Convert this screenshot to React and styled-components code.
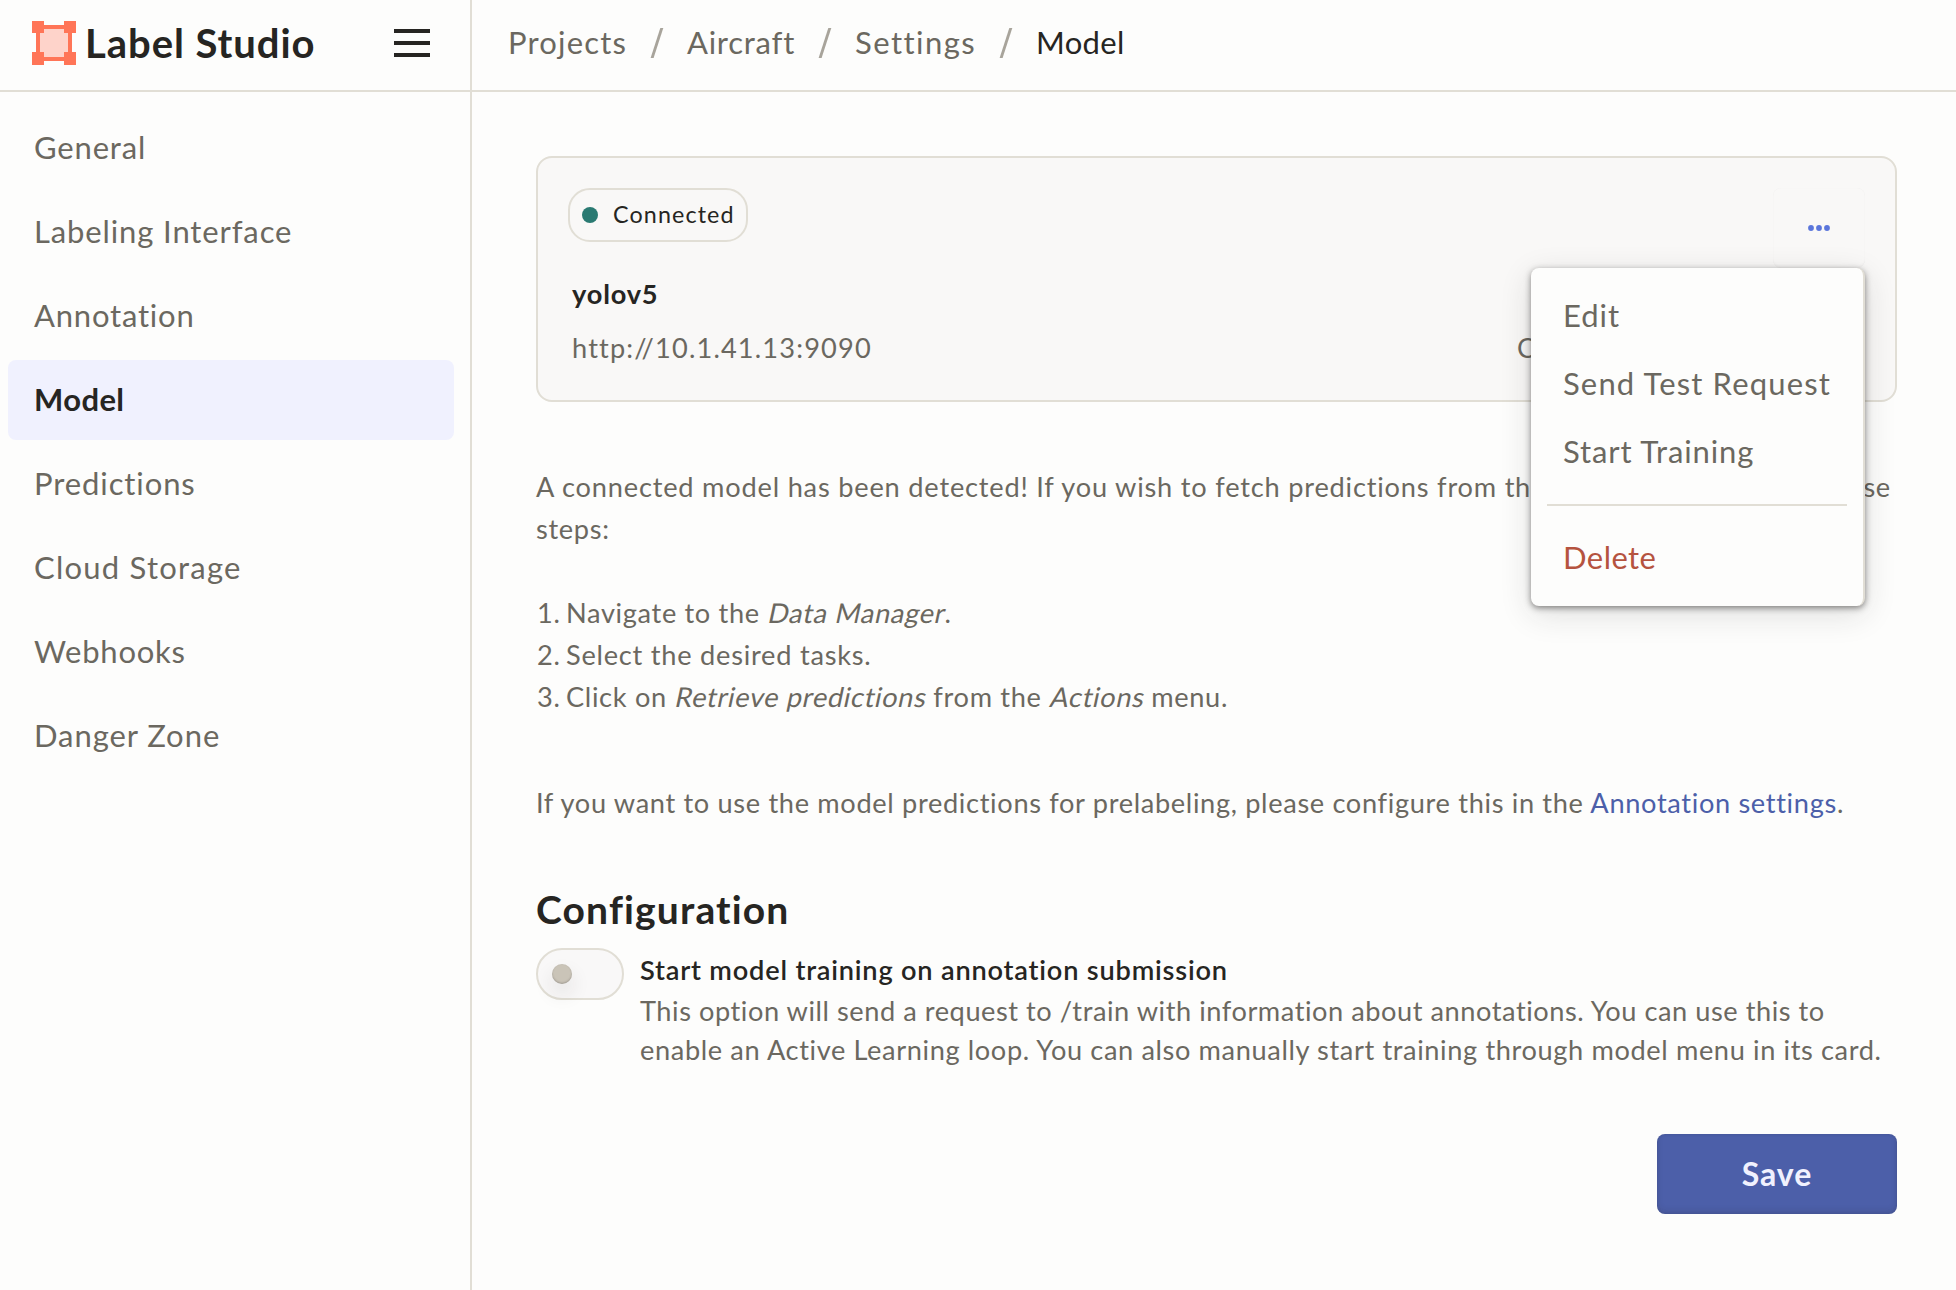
import React from "react";
import styled, { createGlobalStyle } from "styled-components";

const color = {
  page: "#fdfdfc",
  line: "#e1ded5",
  text: "#6b6860",
  strong: "#262522",
  primary: "#4c5fa9",
};

const GlobalStyle = createGlobalStyle`
  *, *::before, *::after { box-sizing: border-box; }
  body {
    margin: 0;
    background: ${color.page};
    color: ${color.text};
    font-family: Lato, "Open Sans", sans-serif;
    overflow: hidden;
  }
`;

const Page = styled.div`
  display: grid;
  grid-template-columns: 472px 1fr;
  grid-template-rows: 92px 1fr;
  height: 1290px;
`;

const Brand = styled.header`
  display: flex;
  align-items: center;
  padding: 0 40px 4px 32px;
  border-right: 2px solid ${color.line};
  border-bottom: 2px solid ${color.line};
`;

const BrandName = styled.span`
  flex: 1;
  margin-left: 9px;
  color: ${color.strong};
  font-size: 40px;
  font-weight: 700;
  letter-spacing: 0.95px;
  white-space: nowrap;
`;

const Crumbs = styled.nav`
  display: flex;
  align-items: center;
  padding: 0 0 6px 36px;
  border-bottom: 2px solid ${color.line};
  white-space: nowrap;
`;

const Crumb = styled.a`
  width: ${(p) => p.$width}px;
  color: ${(p) => (p.$current ? color.strong : color.text)};
  font-size: 31px;
  letter-spacing: ${(p) => p.$spacing}px;
`;

const Slash = styled.svg`
  width: 14px;
  height: 30px;
  margin: 2px 23px 0 23px;
`;

const Sidebar = styled.aside`
  display: flex;
  flex-direction: column;
  gap: 4px;
  padding: 16px 16px 0 8px;
  border-right: 2px solid ${color.line};
`;

const SideItem = styled.a`
  display: flex;
  align-items: center;
  height: 80px;
  padding: 0 26px 2px;
  border-radius: 8px;
  background: ${(p) => (p.$active ? "#f0f1fe" : "transparent")};
  color: ${(p) => (p.$active ? color.strong : color.text)};
  font-size: 31px;
  font-weight: ${(p) => (p.$active ? 700 : 400)};
  letter-spacing: ${(p) => p.$spacing}px;
`;

const Main = styled.main`
  padding: 64px 59px 0 64px;
`;

const Card = styled.section`
  position: relative;
  height: 246px;
  padding: 30px;
  border: 2px solid ${color.line};
  border-radius: 16px;
  background: #f9f8f7;
`;

const CardTop = styled.div`
  display: flex;
  justify-content: space-between;
  height: 54px;
`;

const Badge = styled.div`
  display: flex;
  align-items: center;
  gap: 15px;
  width: 180px;
  height: 54px;
  padding: 0 0 2px 12px;
  border: 2px solid ${color.line};
  border-radius: 22px;
  color: ${color.strong};
  font-size: 23.3px;
  letter-spacing: 1.12px;
  white-space: nowrap;
`;

const Dot = styled.span`
  flex: none;
  width: 16px;
  height: 16px;
  margin-top: 2px;
  border-radius: 50%;
  background: #2a7a72;
`;

const MoreButton = styled.button`
  display: flex;
  align-items: center;
  justify-content: center;
  width: 92px;
  height: 80px;
  padding: 0;
  border: 0;
  border-radius: 8px;
  background: transparent;
  box-shadow: inset 0 -2px 2px rgba(38, 37, 34, 0.02), inset 0 0 1px rgba(38, 37, 34, 0.06);
`;

const ModelName = styled.h3`
  margin: 32px 0 0 4px;
  color: ${color.strong};
  font-size: 27.2px;
  font-weight: 700;
  line-height: 40px;
  letter-spacing: 0.8px;
`;

const ModelMeta = styled.div`
  display: flex;
  justify-content: space-between;
  margin: 14px 0 0 4px;
  font-size: 27.2px;
  line-height: 40px;
`;

const Url = styled.span`
  letter-spacing: 1.15px;
`;

const Created = styled.span`
  width: 348px;
`;

const Menu = styled.div`
  position: absolute;
  top: 110px;
  right: 30px;
  z-index: 1;
  width: 334px;
  height: 338px;
  padding: 13px 16px;
  border-right: 2px solid ${color.line};
  border-radius: 8px;
  background: ${color.page};
  box-shadow: 0 2px 6px rgba(38, 37, 34, 0.55), 0 8px 32px rgba(38, 37, 34, 0.14);
`;

const MenuItem = styled.div`
  height: 68px;
  padding-left: 16px;
  color: ${(p) => (p.$danger ? "#b5533f" : color.text)};
  font-size: 31px;
  line-height: 68px;
  letter-spacing: ${(p) => p.$spacing}px;
  white-space: nowrap;
`;

const MenuDivider = styled.hr`
  height: 2px;
  margin: 19px 0 17px;
  border: 0;
  background: ${color.line};
`;

const Text = styled.p`
  margin: 64px 0 0;
  font-size: 27.2px;
  line-height: 42px;
  letter-spacing: ${(p) => p.$spacing}px;
`;

const Sentence = styled.span`
  letter-spacing: 0.8px;
`;

const Steps = styled.ol`
  margin: 42px 0 0;
  padding: 0;
  list-style: none;
  font-size: 27.2px;
  line-height: 42px;
`;

const Step = styled.li`
  display: flex;
  letter-spacing: ${(p) => p.$spacing}px;
  white-space: pre;
`;

const StepNumber = styled.span`
  width: 30px;
  padding-left: 1px;
`;

const Slanted = styled.span`
  display: inline-block;
  transform: skewX(-12deg);
  transform-origin: 0 72%;
  font-style: normal;
`;

const Link = styled.a`
  color: ${color.primary};
`;

const Heading = styled.h2`
  margin: 61px 0 0;
  color: ${color.strong};
  font-size: 39px;
  font-weight: 700;
  line-height: 48px;
  letter-spacing: 1.15px;
`;

const Option = styled.div`
  display: flex;
  gap: 16px;
  margin-top: 15px;
`;

const Toggle = styled.span`
  flex: none;
  display: flex;
  align-items: center;
  width: 88px;
  height: 52px;
  padding-left: 14px;
  border: 2px solid ${color.line};
  border-radius: 26px;
  background: #f9f8f8;
`;

const Knob = styled.span`
  width: 20px;
  height: 20px;
  border-radius: 50%;
  background: #cac4b8;
  box-shadow: inset 0 -1px 2px rgba(38, 37, 34, 0.25), 0 10px 20px rgba(38, 37, 34, 0.12);
`;

const OptionText = styled.div`
  padding-top: 1px;
  font-size: 27.2px;
`;

const OptionTitle = styled.div`
  margin-bottom: 1px;
  color: ${color.strong};
  font-weight: 600;
  line-height: 41px;
  letter-spacing: 0.8px;
`;

const OptionLine = styled.div`
  line-height: 39.2px;
  letter-spacing: ${(p) => p.$spacing}px;
  white-space: nowrap;
`;

const Actions = styled.div`
  display: flex;
  justify-content: flex-end;
  margin-top: 65px;
`;

const SaveButton = styled.button`
  width: 240px;
  height: 80px;
  padding: 0 0 1px;
  border: 0;
  border-radius: 8px;
  background: ${color.primary};
  box-shadow: inset 0 -3px 6px rgba(38, 37, 34, 0.12), inset 0 0 3px rgba(38, 37, 34, 0.12);
  color: #f0f1fe;
  font-family: inherit;
  font-size: 32px;
  font-weight: 700;
  letter-spacing: 0.9px;
`;

const Logo = () => (
  <svg width="44" height="44" viewBox="0 0 44 44">
    <rect x="6" y="6" width="32" height="32" fill="#fed3ca" />
    <path
      d="M0 0h12v4h20V0h12v12h-4v19h4v13H32v-4H12v4H0V31h4V12H0zM12 8v4H8v19h4v5h20v-5h4V12h-4V8z"
      fill="#ff7557"
      fillRule="evenodd"
    />
  </svg>
);

const Hamburger = () => (
  <svg width="36" height="28" viewBox="0 0 36 28" fill={color.strong}>
    <rect width="36" height="4" />
    <rect y="12" width="36" height="4" />
    <rect y="24" width="36" height="4" />
  </svg>
);

const Dots = () => (
  <svg width="22" height="6" viewBox="0 0 22 6" fill="#5b76db">
    <circle cx="3" cy="3" r="2.9" />
    <circle cx="11" cy="3" r="2.9" />
    <circle cx="19" cy="3" r="2.9" />
  </svg>
);

const sections = [
  ["General", 0.84],
  ["Labeling Interface", 0.88],
  ["Annotation", 0.8],
  ["Model", 0.4],
  ["Predictions", 0.9],
  ["Cloud Storage", 1.23],
  ["Webhooks", 0.75],
  ["Danger Zone", 0.94],
];

const crumbs = [
  ["Projects", 119, 1.17],
  ["Aircraft", 108, 0.75],
  ["Settings", 121, 1.45],
  ["Model", 90, 0.35],
];

export default function App() {
  return (
    <>
      <GlobalStyle />
      <Page>
        <Brand>
          <Logo />
          <BrandName>Label Studio</BrandName>
          <Hamburger />
        </Brand>
        <Crumbs>
          {crumbs.map(([name, width, spacing], i) => (
            <React.Fragment key={name}>
              {i > 0 && (
                <Slash viewBox="0 0 14 30">
                  <path d="M10.3 0H13.3L3.6 30H0.6z" fill="#a8a49b" />
                </Slash>
              )}
              <Crumb $width={width} $spacing={spacing} $current={i === crumbs.length - 1}>
                {name}
              </Crumb>
            </React.Fragment>
          ))}
        </Crumbs>
        <Sidebar>
          {sections.map(([name, spacing]) => (
            <SideItem key={name} $spacing={spacing} $active={name === "Model"}>
              {name}
            </SideItem>
          ))}
        </Sidebar>
        <Main>
          <Card>
            <CardTop>
              <Badge>
                <Dot />
                Connected
              </Badge>
              <MoreButton aria-label="More">
                <Dots />
              </MoreButton>
            </CardTop>
            <ModelName>yolov5</ModelName>
            <ModelMeta>
              <Url>http://10.1.41.13:9090</Url>
              <Created>Created 2 months ago</Created>
            </ModelMeta>
            <Menu>
              <MenuItem $spacing={0.98}>Edit</MenuItem>
              <MenuItem $spacing={1.15}>Send Test Request</MenuItem>
              <MenuItem $spacing={0.88}>Start Training</MenuItem>
              <MenuDivider />
              <MenuItem $danger $spacing={0.45}>
                Delete
              </MenuItem>
            </Menu>
          </Card>
          <Text $spacing={0.67}>
            <Sentence>A connected model has been detected! If you wish to fetch predictions from </Sentence>
            this model, please follow these steps:
          </Text>
          <Steps>
            <Step $spacing={0.66}>
              <StepNumber>1.</StepNumber>
              <span>
                Navigate to the <Slanted>Data Manager</Slanted>.
              </span>
            </Step>
            <Step $spacing={0.76}>
              <StepNumber>2.</StepNumber>
              <span>Select the desired tasks.</span>
            </Step>
            <Step $spacing={0.67}>
              <StepNumber>3.</StepNumber>
              <span>
                Click on <Slanted>Retrieve predictions</Slanted> from the <Slanted>Actions</Slanted> menu.
              </span>
            </Step>
          </Steps>
          <Text $spacing={0.665}>
            If you want to use the model predictions for prelabeling, please configure this in the{" "}
            <Link>Annotation settings</Link>.
          </Text>
          <Heading>Configuration</Heading>
          <Option>
            <Toggle>
              <Knob />
            </Toggle>
            <OptionText>
              <OptionTitle>Start model training on annotation submission</OptionTitle>
              <OptionLine $spacing={0.55}>
                This option will send a request to /train with information about annotations. You can use this to
              </OptionLine>
              <OptionLine $spacing={0.62}>
                enable an Active Learning loop. You can also manually start training through model menu in its card.
              </OptionLine>
            </OptionText>
          </Option>
          <Actions>
            <SaveButton>Save</SaveButton>
          </Actions>
        </Main>
      </Page>
    </>
  );
}
